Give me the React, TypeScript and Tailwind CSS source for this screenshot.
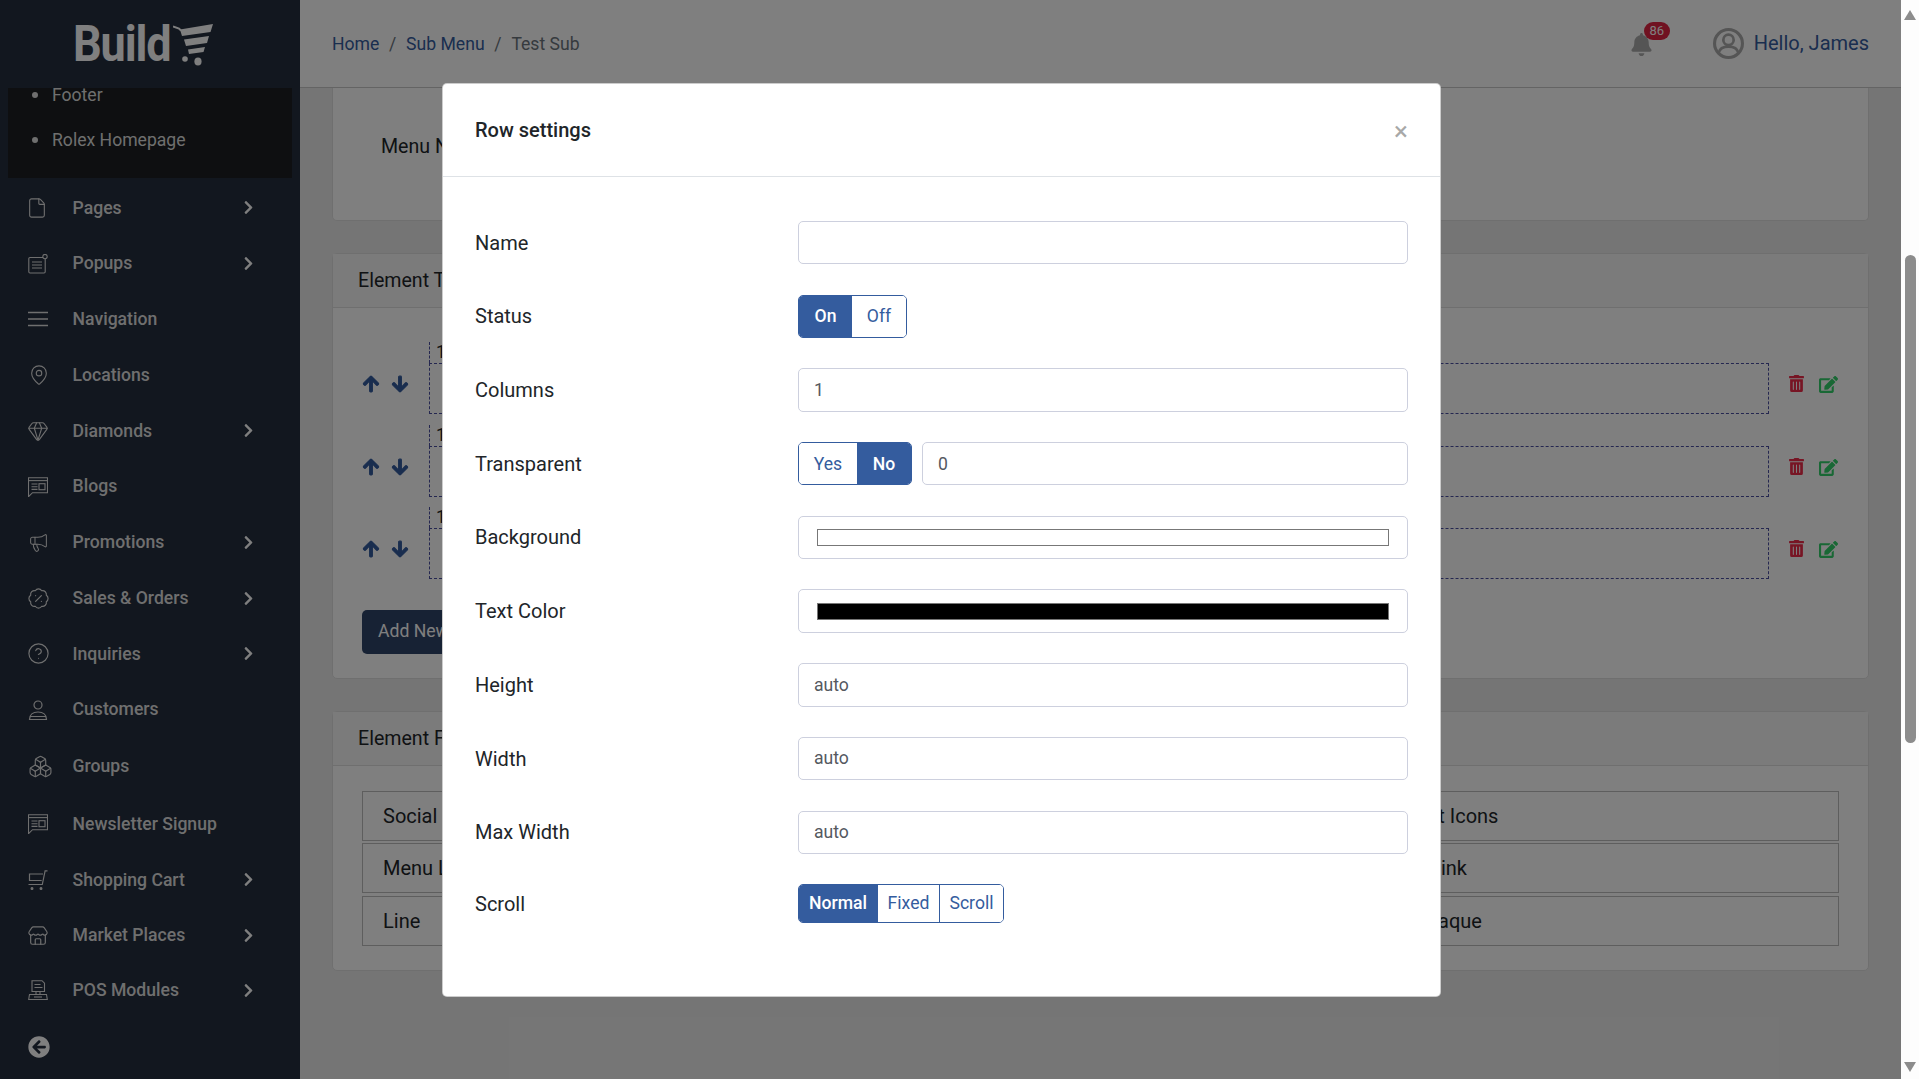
import React from 'react';
import { BadgePercent, Boxes, CircleHelp, File, Gem, MapPin, Megaphone, Store } from 'lucide-react';
import { FaArrowCircleLeft, FaArrowDown, FaArrowUp, FaBell, FaChevronRight, FaEdit, FaTrashAlt } from 'react-icons/fa';

const PopupIcon = () => (
  <svg viewBox="0 0 20 20" className="w-5 h-5" fill="none" stroke="currentColor" strokeWidth="1.1">
    <path d="M15 3.5H2a1.2 1.2 0 0 0-1.2 1.2v13.1A1.2 1.2 0 0 0 2 19h14a1.2 1.2 0 0 0 1.2-1.2V5" />
    <path d="M4 8h10M4 11h10M4 14h10" />
    <circle cx="17" cy="2.6" r="2.2" />
  </svg>
);

const NavIcon = () => (
  <svg viewBox="0 0 20 20" className="w-5 h-5" fill="none" stroke="currentColor" strokeWidth="1.4">
    <path d="M0 3.5h20M0 10h20M0 16.5h20" />
  </svg>
);

const BlogIcon = () => (
  <svg viewBox="0 0 20 20" className="w-5 h-5" fill="none" stroke="currentColor" strokeWidth="1.1">
    <path d="M.5 .7h19v15H4.500l-4 4z" />
    <path d="M.5 3.600h19" />
    <path d="M3.500 7h6M3.500 9.700h6M3.500 12.400h6" />
    <rect x="11" y="6.700" width="6" height="6" />
  </svg>
);

const UserIcon = () => (
  <svg viewBox="0 0 20 20" className="w-5 h-5" fill="none" stroke="currentColor" strokeWidth="1.2">
    <circle cx="10" cy="5" r="4" />
    <path d="M1.500 19.500c0-5 3.500-7.500 8.500-7.500s8.500 2.500 8.500 7.500zM1.500 16.500h17" />
  </svg>
);

const CartIcon = () => (
  <svg viewBox="0 0 20 20" className="w-5 h-5" fill="none" stroke="currentColor" strokeWidth="1.2">
    <path d="M19.500 .8h-2.400L14.300 14.500H.5" />
    <path d="M15 4H1.500v6.500H13.700" />
    <circle cx="4" cy="18.500" r=".9" fill="currentColor" />
    <circle cx="13" cy="18.500" r=".9" fill="currentColor" />
  </svg>
);

const PosIcon = () => (
  <svg viewBox="0 0 20 20" className="w-5 h-5" fill="none" stroke="currentColor" strokeWidth="1.1">
    <path d="M4 .7h10l2.500 2.500v8.300H4z" />
    <path d="M6.500 4.500h6M6.500 7.500h8" />
    <path d="M8 11.500v3M12 11.500v3" />
    <path d="M1.500 14.500h17l.8 5H.7z" />
    <path d="M6 17h8" />
  </svg>
);

// thick ring, outlined head, shoulders arc
const AvatarIcon = () => (
  <svg viewBox="0 0 30 30" className="w-[31px] h-[31px] text-[#aaaaaa]" fill="none" stroke="currentColor">
    <circle cx="15" cy="15" r="13.500" strokeWidth="3" />
    <circle cx="15" cy="11.500" r="5" strokeWidth="2.600" />
    <path d="M5.500 24c1-4.500 4.500-6 9.500-6s8.500 1.500 9.500 6" strokeWidth="2.600" />
  </svg>
);

const navItems = [
  { label: 'Pages', icon: <span className="-ml-[2px]"><File size={22} strokeWidth={1.2} /></span>, arrow: true, extra: '' },
  { label: 'Popups', icon: <PopupIcon />, arrow: true, extra: '' },
  { label: 'Navigation', icon: <NavIcon />, arrow: false, extra: '' },
  { label: 'Locations', icon: <MapPin size={22} strokeWidth={1.2} />, arrow: false, extra: '' },
  { label: 'Diamonds', icon: <span className="-ml-px"><Gem size={22} strokeWidth={1.2} /></span>, arrow: true, extra: '' },
  { label: 'Blogs', icon: <BlogIcon />, arrow: false, extra: '' },
  { label: 'Promotions', icon: <Megaphone size={21} strokeWidth={1.2} />, arrow: true, extra: '' },
  { label: 'Sales & Orders', icon: <span className="-ml-px"><BadgePercent size={23} strokeWidth={1.2} /></span>, arrow: true, extra: '' },
  { label: 'Inquiries', icon: <span className="-ml-px"><CircleHelp size={23} strokeWidth={1.2} /></span>, arrow: true, extra: '' },
  { label: 'Customers', icon: <UserIcon />, arrow: false, extra: '' },
  { label: 'Groups', icon: <Boxes size={25} strokeWidth={1.1} />, arrow: false, extra: 'mt-px' },
  { label: 'Newsletter Signup', icon: <BlogIcon />, arrow: false, extra: 'mt-[2px]' },
  { label: 'Shopping Cart', icon: <CartIcon />, arrow: true, extra: '' },
  { label: 'Market Places', icon: <span className="-ml-px"><Store size={22} strokeWidth={1.3} /></span>, arrow: true, extra: '' },
  { label: 'POS Modules', icon: <PosIcon />, arrow: true, extra: '-mt-px' },
];

const Sidebar = () => (
  <aside className="w-[300px] shrink-0 bg-[#242e3e] text-[#dedede] flex flex-col">
    <div className="h-[88px] flex items-start pl-[73px] pt-[16px]">
      <span className="text-[#ffffff] font-bold text-[50px] leading-[56px] tracking-tight origin-left scale-x-[0.9] w-[100px]">Build</span>
      <svg viewBox="0 0 40 43" className="w-[40px] h-[43px] mt-[7px]" fill="#ffffff">
        <path d="M0 3.500l6 2 2 2" fill="none" stroke="#ffffff" strokeWidth="2" />
        <path d="M7 6.500L40 1l-2.500 8L9 13z" />
        <path d="M11 16.500l25-3.500-2 7-21 3z" />
        <path d="M15 26.500l17-2.500-1.500 5L16 31z" />
        <circle cx="12" cy="36" r="2.800" />
        <ellipse cx="25" cy="38.500" rx="3.600" ry="4" />
      </svg>
    </div>
    <div className="mx-2 h-[90px] bg-[#1c1e22] text-[17.6px]">
      <div className="flex items-center h-[20px] -mt-[3px] pl-[24px] gap-[14px]">
        <span className="w-[6px] h-[6px] rounded-full bg-[#dedede]" />
        Footer
      </div>
      <div className="flex items-center h-[20px] mt-[25px] pl-[24px] gap-[14px]">
        <span className="w-[6px] h-[6px] rounded-full bg-[#dedede]" />
        Rolex Homepage
      </div>
    </div>
    <nav className="pt-[2px] flex flex-col">
      {navItems.map((item) => (
        <div key={item.label} className={`h-[55.75px] shrink-0 flex items-center pl-[28px] pr-[44px] text-[17.6px] font-medium ${item.extra}`}>
          <span className="w-[44.600px] shrink-0 flex items-center">{item.icon}</span>
          <span className="flex-1">{item.label}</span>
          {item.arrow && <FaChevronRight className="text-[15px] text-white" />}
        </div>
      ))}
    </nav>
    <div className="pl-[28px] pt-[18px]">
      <FaArrowCircleLeft className="text-[22px] text-white" />
    </div>
  </aside>
);

const Topbar = () => (
  <header className="h-[88px] shrink-0 bg-white border-b border-[#c8c8c8] flex items-center pl-[32px] pr-[32px]">
    <div className="flex-1 text-[17.6px] flex gap-[9.750px] text-[#6c757d] pt-[1px]">
      <span className="text-[#345c9e]">Home</span>
      <span>/</span>
      <span className="text-[#345c9e]">Sub Menu</span>
      <span>/</span>
      <span>Test Sub</span>
    </div>
    <div className="relative mr-[60px] mt-[2px]">
      <FaBell className="text-[23px] text-[#ababab]" />
      <span className="absolute -top-[11px] left-[14px] w-[26px] h-[18px] rounded-full bg-[#e02442] text-white text-[13px] leading-[18px] text-center">86</span>
    </div>
    <span className="mr-[10px]"><AvatarIcon /></span>
    <span className="text-[20px] text-[#345c9e] -mt-[2px]">Hello, James</span>
  </header>
);

const RowEditor = () => (
  <div className="flex h-[72px] items-start mb-[10.500px]">
    <div className="w-[67px] shrink-0 pt-[33px] flex gap-[11px] text-[18px] text-[#345c9e]">
      <FaArrowUp stroke="currentColor" strokeWidth={30} />
      <FaArrowDown stroke="currentColor" strokeWidth={30} />
    </div>
    <div className="flex-1 flex flex-col">
      <div className="h-[21px] w-[200px] border-l border-dashed border-[#4a4fa0] pl-[6px] text-[17.6px] leading-[20px] text-[#212529]">1 Column</div>
      <div className="h-[51px] border border-dashed border-[#4a4fa0]" />
    </div>
    <div className="w-[70px] shrink-0 pl-[19px] pt-[33px] flex gap-[14px]">
      <FaTrashAlt className="text-[17px] text-[#ee2a48]" />
      <FaEdit className="text-[19px] text-[#33d06a]" />
    </div>
  </div>
);

const fieldRows = [
  { left: 'Social Icons', right: 'Payment Icons', extra: '' },
  { left: 'Menu Link', right: 'Button Link', extra: '' },
  { left: 'Line', right: 'Card Opaque', extra: 'mt-px' },
];

const Content = () => (
  <main className="flex-1 min-w-0 bg-[#ebebeb] flex flex-col text-[#212529]">
    <Topbar />
    <div className="px-[32px] flex flex-col gap-[32px]">
      <section className="h-[133px] bg-white border border-[#dfdfdf] border-t-0 rounded-b-[5px] pl-[48px] pt-[44px] text-[19.6px]">
        Menu Name
      </section>
      <section className="h-[426px] bg-white border border-[#dfdfdf] rounded-[5px]">
        <div className="h-[54px] bg-[#f7f7f7] border-b border-[#dfdfdf] pl-[25px] flex items-center text-[19.6px]">Element Types</div>
        <div className="px-[29px] pt-[34px]">
          <RowEditor />
          <RowEditor />
          <RowEditor />
          <button className="mt-[20px] h-[44px] px-[16px] rounded-[5px] bg-[#2f4468] text-white text-[17.6px]">Add New Row</button>
        </div>
      </section>
      <section className="h-[260px] bg-white border border-[#dfdfdf] rounded-[5px]">
        <div className="h-[54px] bg-[#f7f7f7] border-b border-[#dfdfdf] pl-[25px] flex items-center text-[19.6px]">Element Fields</div>
        <div className="px-[29px] pt-[25px] flex flex-col gap-y-[2px]">
          {fieldRows.map((r) => (
            <div key={r.left} className={`h-[50px] grid grid-cols-3 border border-[#bcbcbc] items-center text-[20px] ${r.extra}`}>
              <span className="pl-[20px]">{r.left}</span>
              <span />
              <span className="pl-[20px]">{r.right}</span>
            </div>
          ))}
        </div>
      </section>
    </div>
  </main>
);

const Field = ({ label, children, last }: { label: string; children: React.ReactNode; last?: boolean }) => (
  <div className={`grid grid-cols-[323px_1fr] items-center ${last ? 'h-[39px]' : 'h-[43.400px]'}`}>
    <label className="text-[20px] text-[#212529]">{label}</label>
    <div className="flex h-full">{children}</div>
  </div>
);

const Input = ({ value }: { value: string }) => (
  <div className="h-full flex-1 border border-[#cdd0de] rounded-[5px] pl-[15px] flex items-center text-[17.6px] text-[#55595f]">{value}</div>
);

const Swatch = ({ color }: { color: string }) => (
  <div className="h-full flex-1 border border-[#cdd0de] rounded-[5px] px-[18px] flex items-center">
    <div className={`w-full h-[17px] border border-[#777777] ${color}`} />
  </div>
);

const Toggle = ({ options, active, widths }: { options: string[]; active: string; widths: string[] }) => (
  <div className="h-full flex shrink-0 rounded-[5px] border border-[#345c9e] overflow-hidden text-[17.6px]">
    {options.map((o, i) => (
      <span
        key={o}
        className={`flex items-center justify-center ${widths[i]} ${i > 0 && options.length > 2 ? 'border-l border-[#345c9e]' : ''} ${o === active ? 'bg-[#345c9e] text-white font-medium' : 'bg-white text-[#345c9e]'}`}
      >
        {o}
      </span>
    ))}
  </div>
);

const RowSettingsModal = () => (
  <div className="absolute left-[442px] top-[83px] w-[999px] h-[914px] bg-white border border-black/20 rounded-[5px] flex flex-col">
    <div className="h-[93px] shrink-0 border-b border-[#dee2e6] flex items-center justify-between pl-[32px] pr-[32px]">
      <span className="text-[20px] font-medium text-[#212529]">Row settings</span>
      <span className="text-[26px] leading-none text-[#a8a8a8] pt-[2px]">×</span>
    </div>
    <div className="pl-[32px] pr-[32px] pt-[44px] flex flex-col gap-[30.300px]">
      <Field label="Name"><Input value="" /></Field>
      <Field label="Status"><Toggle options={['On', 'Off']} active="On" widths={['w-[53px]', 'w-[54px]']} /></Field>
      <Field label="Columns"><Input value="1" /></Field>
      <Field label="Transparent">
        <Toggle options={['Yes', 'No']} active="No" widths={['w-[58px]', 'w-[54px]']} />
        <div className="w-[10px] shrink-0" />
        <Input value="0" />
      </Field>
      <Field label="Background"><Swatch color="bg-white" /></Field>
      <Field label="Text Color"><Swatch color="bg-black" /></Field>
      <Field label="Height"><Input value="auto" /></Field>
      <Field label="Width"><Input value="auto" /></Field>
      <Field label="Max Width"><Input value="auto" /></Field>
      <Field label="Scroll" last><Toggle options={['Normal', 'Fixed', 'Scroll']} active="Normal" widths={['w-[78px]', 'w-[62px]', 'w-[64px]']} /></Field>
    </div>
  </div>
);

const Scrollbar = () => (
  <div className="w-[18px] shrink-0 bg-[#fdfdfd] relative flex flex-col items-center">
    <svg viewBox="0 0 12 10" className="w-[12px] h-[10px] mt-[10px] fill-[#8c8c8c]"><path d="M6 0l6 10H0z" /></svg>
    <div className="w-[11px] h-[488px] mt-[235px] rounded-full bg-[#8c8c8c]" />
    <svg viewBox="0 0 12 10" className="w-[12px] h-[10px] mt-[319px] fill-[#8c8c8c]"><path d="M0 0h12L6 10z" /></svg>
  </div>
);

export default function App() {
  return (
    <div className="relative h-screen w-full flex overflow-hidden font-['Roboto',sans-serif]">
      <Sidebar />
      <Content />
      <Scrollbar />
      <div className="absolute left-0 top-0 bottom-0 w-[1901px] bg-black/50" />
      <RowSettingsModal />
    </div>
  );
}
